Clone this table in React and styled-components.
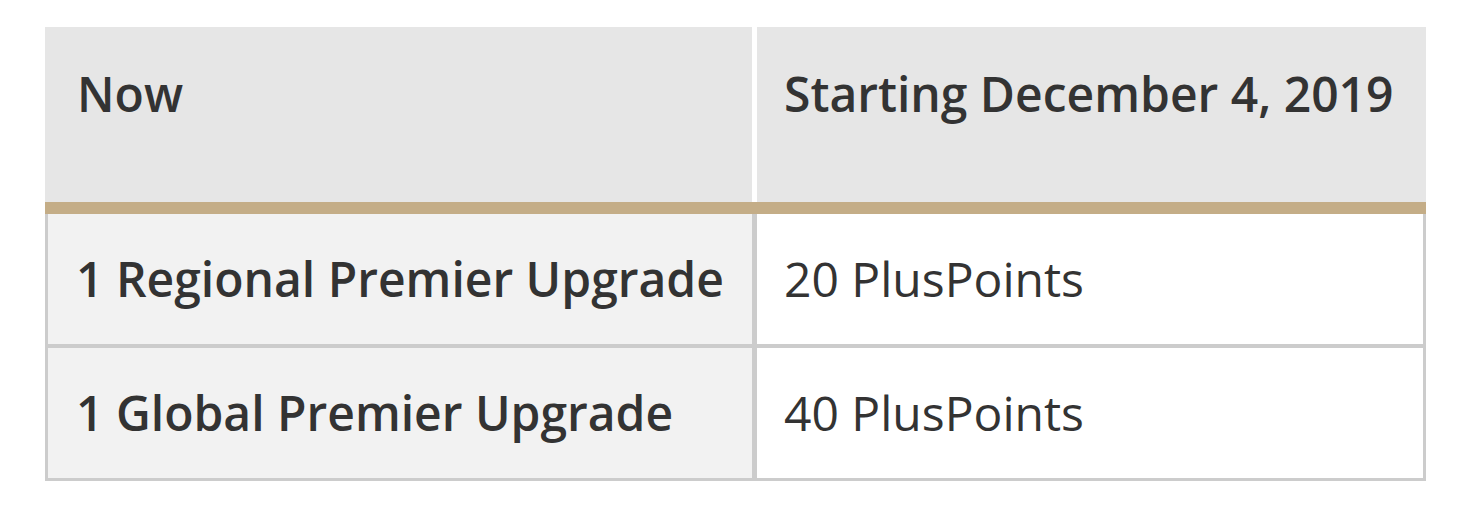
import React from "react";
import styled, { createGlobalStyle } from "styled-components";

const Global = createGlobalStyle`
  html, body { margin: 0; padding: 0; background: #ffffff; }
  body { font-family: "Open Sans", "Liberation Sans", sans-serif; color: #333333; }
`;

const Page = styled.div`
  padding: 27px 0 0 45px;
`;

const Table = styled.div`
  width: 1381px;
  display: flex;
  flex-direction: column;
`;

const HeadRow = styled.div`
  display: grid;
  grid-template-columns: 707px 669px;
  column-gap: 5px;
  background: #ffffff;
  border-bottom: 12px solid #c4ad87;
`;

const HeadCell = styled.div`
  height: 175px;
  box-sizing: border-box;
  background: #e6e6e6;
  padding: 31px 0 0 ${(p) => p.$pad}px;
  font-size: 48px;
  line-height: 1.5;
  font-weight: 600;
  color: #333333;
  white-space: nowrap;
`;

const Body = styled.div`
  display: grid;
  grid-template-columns: 704px 666px;
  grid-auto-rows: 130px;
  gap: 4px 5px;
  background: #cccccc;
  border: 3px solid #cccccc;
  border-top: none;
`;

const Cell = styled.div`
  display: flex;
  align-items: center;
  padding-left: ${(p) => p.$pad}px;
  background: ${(p) => (p.$label ? "#f2f2f2" : "#ffffff")};
  font-size: 48px;
  line-height: 1.5;
  font-weight: ${(p) => (p.$label ? 600 : 400)};
  color: #333333;
  white-space: nowrap;
`;

const rows = [
  ["1 Regional Premier Upgrade", "20 PlusPoints"],
  ["1 Global Premier Upgrade", "40 PlusPoints"],
];

export default function App() {
  return (
    <>
      <Global />
      <Page>
        <Table>
          <HeadRow>
            <HeadCell $pad={32}>Now</HeadCell>
            <HeadCell $pad={27}>Starting December 4, 2019</HeadCell>
          </HeadRow>
          <Body>
            {rows.map(([a, b]) => (
              <React.Fragment key={a}>
                <Cell $label $pad={28}>{a}</Cell>
                <Cell $pad={27}>{b}</Cell>
              </React.Fragment>
            ))}
          </Body>
        </Table>
      </Page>
    </>
  );
}
